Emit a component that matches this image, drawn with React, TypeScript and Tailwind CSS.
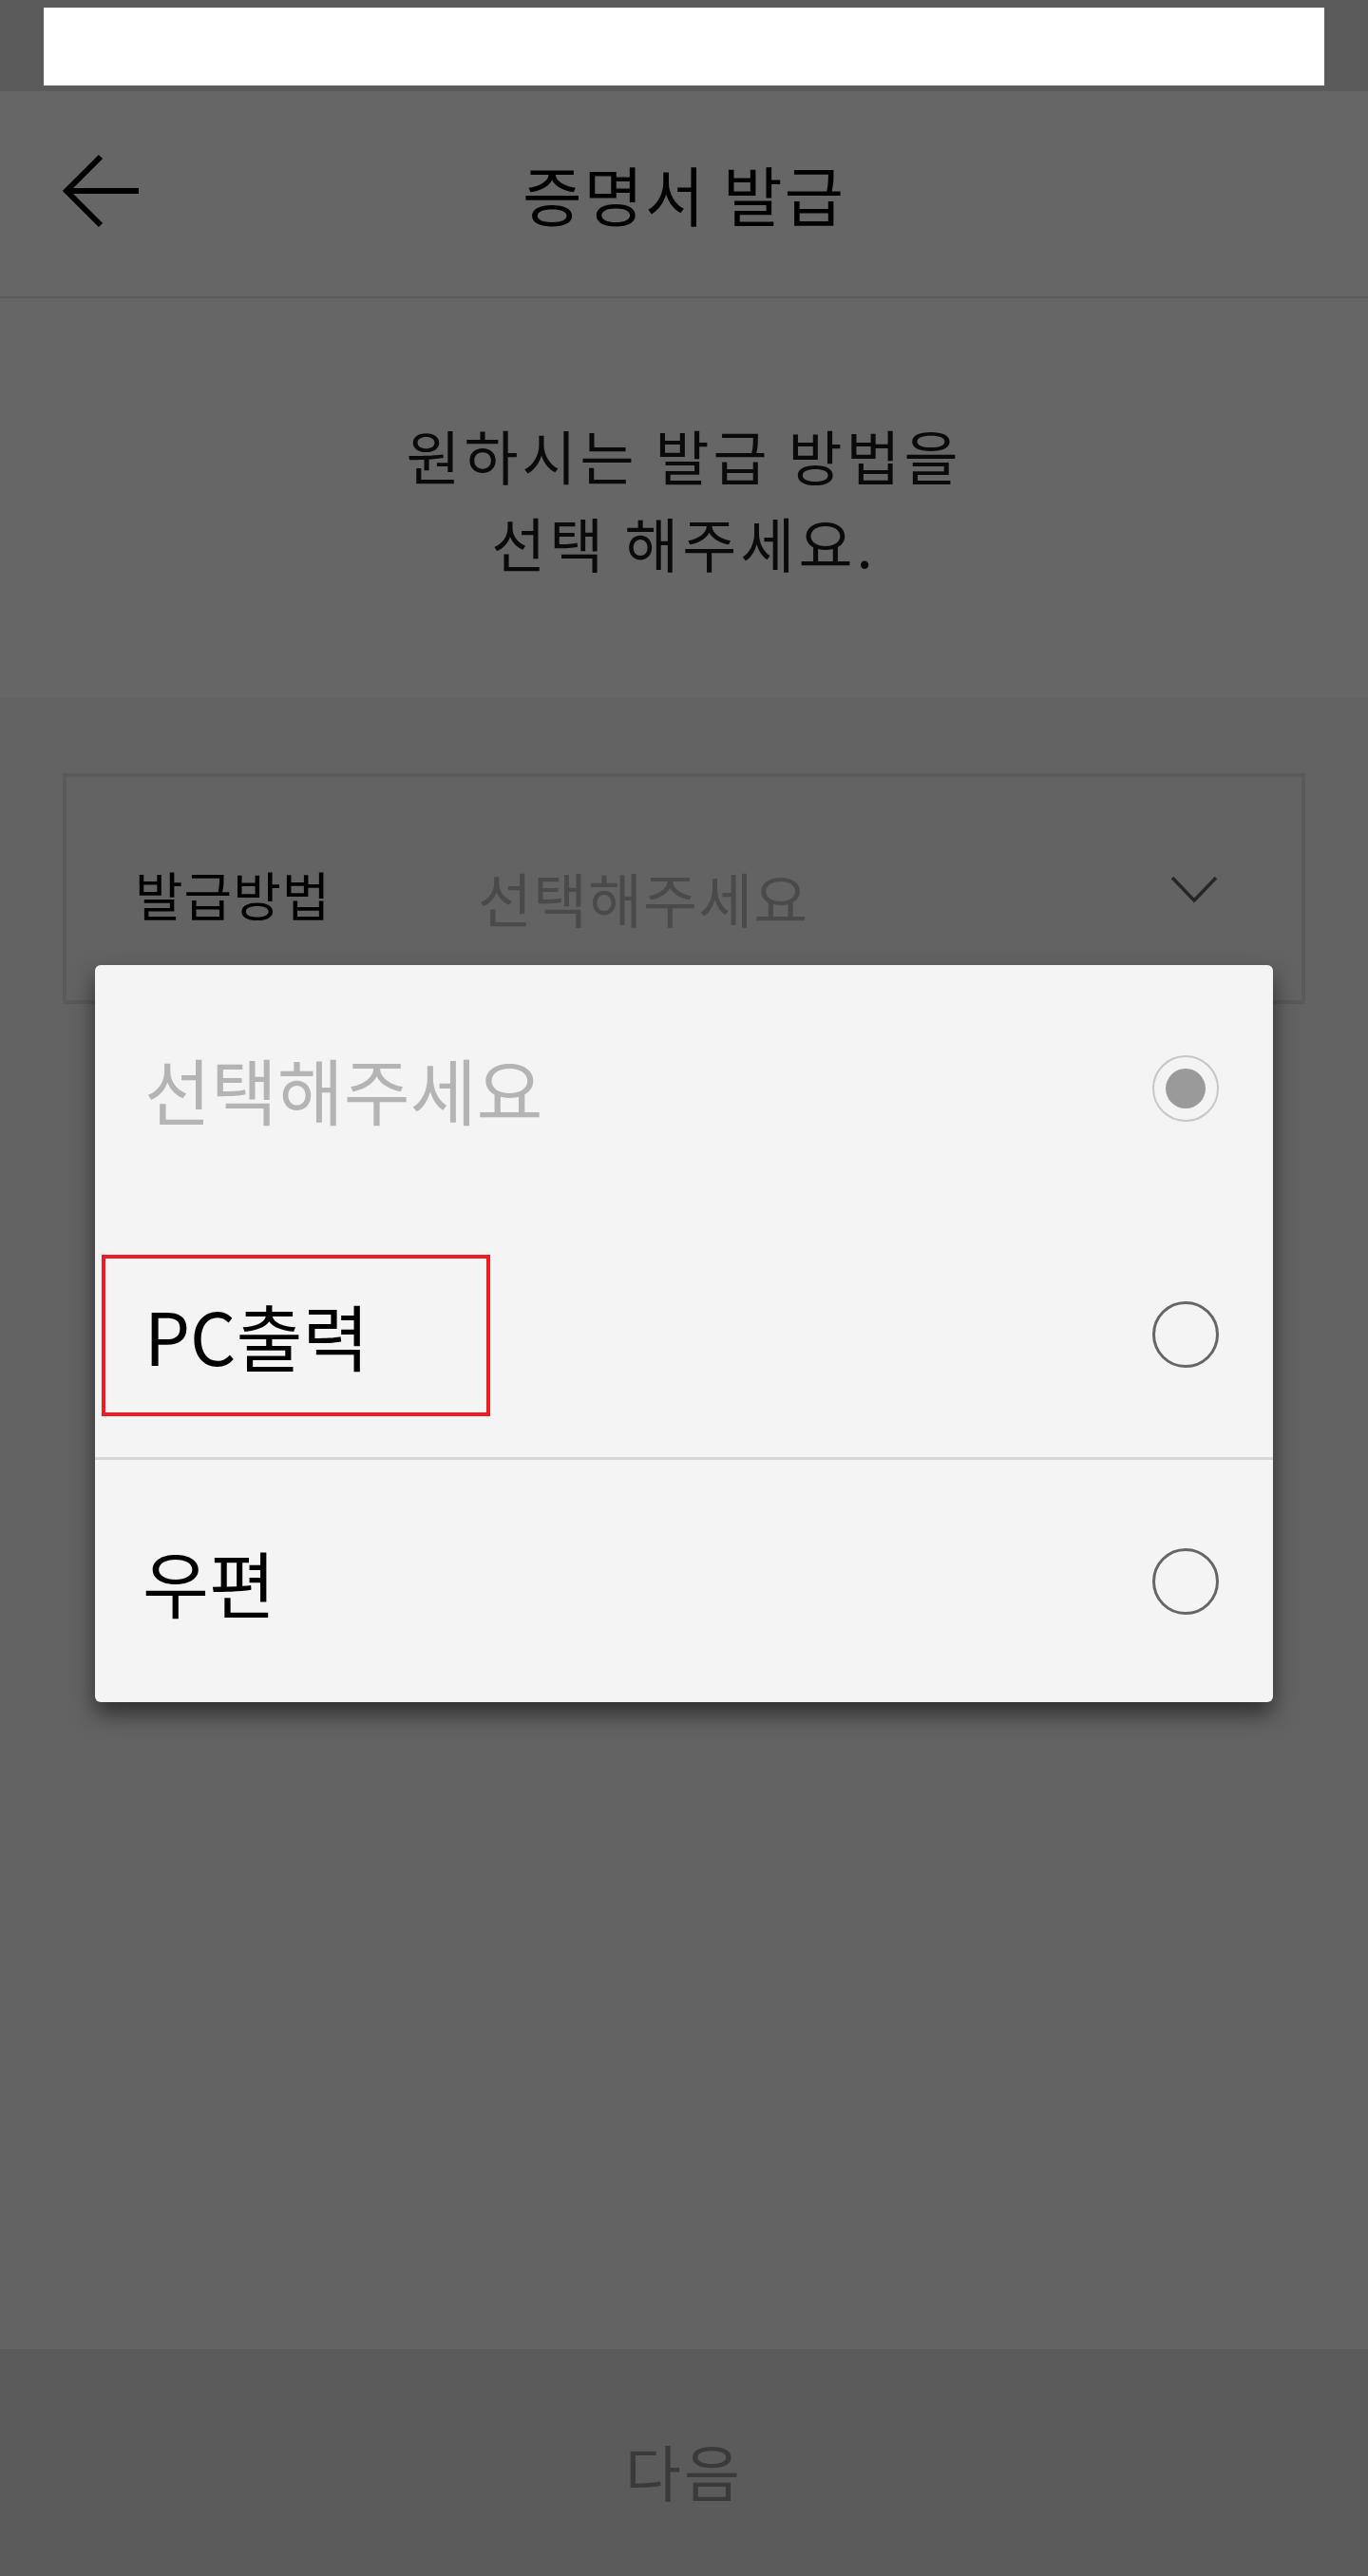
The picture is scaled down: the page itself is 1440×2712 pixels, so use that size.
import React from 'react';

const FONT = { fontFamily: '"Noto Sans CJK KR", "Noto Sans", sans-serif' };

const BackArrow: React.FC = () => (
  <svg width="82" height="78" viewBox="0 0 82 78" fill="none" stroke="#000" strokeWidth={6}>
    <path d="M80 39H5" />
    <path d="M40 3L4 39L40 75" strokeLinejoin="miter" />
  </svg>
);

const Chevron: React.FC = () => (
  <svg width="50" height="30" viewBox="0 0 50 30" fill="none" stroke="#262626" strokeWidth={3.5}>
    <path d="M2 3L25 27L48 3" />
  </svg>
);

const Radio: React.FC<{ checked?: boolean }> = ({ checked }) =>
  checked ? (
    <div className="w-[70px] h-[70px] rounded-full border-[2.5px] border-[#c6c6c6] flex items-center justify-center">
      <div className="w-[42px] h-[42px] rounded-full bg-[#9a9a9a]" />
    </div>
  ) : (
    <div className="w-[70px] h-[70px] rounded-full border-[3px] border-[#666666]" />
  );

export default function App() {
  return (
    <div className="relative w-[1440px] h-[2712px] flex flex-col bg-[#636363]" style={FONT}>
      {/* Status bar */}
      <div className="h-[96px] bg-[#5b5b5b] px-[46px] pt-[8px]">
        <div className="h-[82px] bg-white" />
      </div>

      {/* Header */}
      <div className="relative h-[218px] bg-[#666666] border-b-2 border-[#5a5a5a] flex items-center justify-center">
        <div className="absolute left-[66px] top-[66px]">
          <BackArrow />
        </div>
        <h1 className="text-[68px] font-normal tracking-[2px] leading-none text-black">증명서 발급</h1>
      </div>

      {/* Intro */}
      <div className="h-[421px] bg-[#666666] flex flex-col items-center justify-center text-[62px] tracking-[4px] leading-[92px] text-[#0a0a0a]">
        <p>원하시는 발급 방법을</p>
        <p>선택 해주세요.</p>
      </div>

      {/* Form */}
      <div className="flex-1 bg-[#636363] pt-[79px] px-[66px]">
        <div className="h-[243px] border-4 border-[#5a5a5a] flex items-center pl-[72px] pr-[88px]">
          <span className="w-[361px] text-[55px] tracking-[1px] text-black leading-none pt-[10px]">발급방법</span>
          <span className="flex-1 text-[62px] tracking-[1px] text-[#4a4a4a] leading-none pt-[18px]">선택해주세요</span>
          <Chevron />
        </div>
      </div>

      {/* Bottom button */}
      <div className="h-[239px] bg-[#5b5b5b] flex items-center justify-center">
        <span className="text-[64px] tracking-[3px] leading-none text-[#3a3a3a] pt-[14px]">다음</span>
      </div>

      {/* Dropdown popup */}
      <div className="absolute top-[1016px] left-[100px] w-[1240px] h-[776px] bg-[#f4f4f4] rounded-[6px] shadow-[0_12px_24px_rgba(0,0,0,0.55)] flex flex-col">
        <div className="h-[259px] flex items-center justify-between pl-[52px] pr-[57px]">
          <span className="text-[76px] leading-none text-[#b4b4b4]">선택해주세요</span>
          <Radio checked />
        </div>
        <div className="relative h-[259px] flex items-center justify-between pl-[52px] pr-[57px]">
          <span className="text-[76px] leading-none text-black">PC출력</span>
          <Radio />
          <div className="absolute left-[7px] top-[46px] w-[409px] h-[170px] border-4 border-[#ed1c24]" />
        </div>
        <div className="h-[3px] bg-[#d6d6d6]" />
        <div className="flex-1 flex items-center justify-between pl-[50px] pr-[57px]">
          <span className="text-[76px] leading-none text-black">우편</span>
          <Radio />
        </div>
      </div>
    </div>
  );
}
